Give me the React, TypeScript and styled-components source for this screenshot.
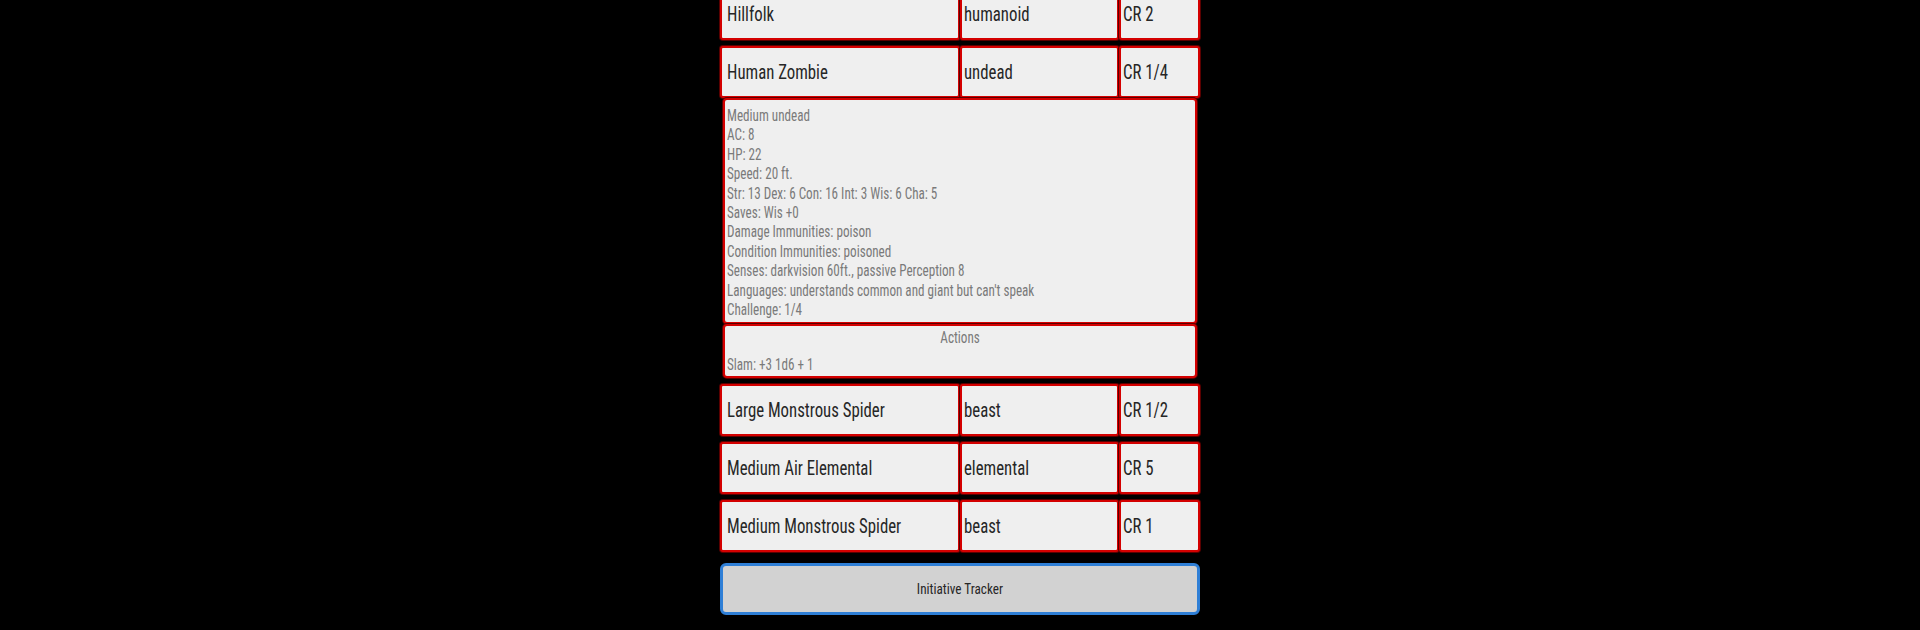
import styled, { createGlobalStyle } from 'styled-components'

const FONT = `"Roboto Condensed", Roboto, "Liberation Sans", sans-serif`

const GlobalStyle = createGlobalStyle`
  html, body {
    margin: 0;
    padding: 0;
    background: #000;
    height: 630px;
    overflow: hidden;
  }
  body {
    font-family: ${FONT};
  }
`

// no condensed face installed: squeeze Roboto to the condensed widths
const Narrow = styled.span<{ $x?: number; $origin?: string }>`
  display: inline-block;
  white-space: nowrap;
  transform: scaleX(${(p) => p.$x ?? 0.86});
  transform-origin: ${(p) => p.$origin ?? 'left'} center;
`

const Screen = styled.div`
  width: 480px;
  margin: 0 auto;
  display: flex;
  flex-direction: column;
  /* list is scrolled a little: first row is cut at the top */
  margin-top: -12px;
`

const Row = styled.div<{ $open?: boolean }>`
  display: grid;
  grid-template-columns: 240px 159px 81px;
  height: 52px;
  margin-bottom: ${(p) => (p.$open ? '0' : '6px')};
`

const Cell = styled.div<{ $pad?: number }>`
  box-sizing: border-box;
  display: flex;
  align-items: center;
  padding-left: ${(p) => p.$pad ?? 3}px;
  background: #efefef;
  border: 2px solid #d40000;
  border-radius: 3px;
  box-shadow: 0 0 0 1px #5a0000;
  color: #262626;
  font-size: 19.5px;
  overflow: hidden;
`

const Details = styled.div`
  box-sizing: border-box;
  margin: 0 3px;
  padding: 6px 2px 2px;
  height: 226px;
  background: #efefef;
  border: 2px solid #d40000;
  border-radius: 4px;
  box-shadow: 0 0 0 1px #5a0000;
  color: #7a7a7a;
  font-size: 16px;
  line-height: 19.4px;
`

const Line = styled.div`
  white-space: nowrap;
`

const Actions = styled(Details)`
  height: 54px;
  padding-top: 2px;
  margin-bottom: 6px;
`

const ActionsTitle = styled.div`
  text-align: center;
  margin-bottom: 8px;
`

const TrackerButton = styled.button`
  box-sizing: border-box;
  margin-top: 5px;
  width: 480px;
  height: 52px;
  background: #d2d2d2;
  border: 3px solid #2f7fd6;
  border-radius: 6px;
  color: #262626;
  font-family: ${FONT};
  font-size: 15px;
  cursor: pointer;
`

interface Monster {
  name: string
  type: string
  cr: string
}

const monsters: Monster[] = [
  { name: 'Hillfolk', type: 'humanoid', cr: 'CR 2' },
  { name: 'Human Zombie', type: 'undead', cr: 'CR 1/4' },
  { name: 'Large Monstrous Spider', type: 'beast', cr: 'CR 1/2' },
  { name: 'Medium Air Elemental', type: 'elemental', cr: 'CR 5' },
  { name: 'Medium Monstrous Spider', type: 'beast', cr: 'CR 1' },
]

const zombieStats = [
  'Medium undead',
  'AC: 8',
  'HP: 22',
  'Speed: 20 ft.',
  'Str: 13 Dex: 6 Con: 16 Int: 3 Wis: 6 Cha: 5',
  'Saves: Wis +0',
  'Damage Immunities: poison',
  'Condition Immunities: poisoned',
  'Senses: darkvision 60ft., passive Perception 8',
  "Languages: understands common and giant but can't speak",
  'Challenge: 1/4',
]

const OPEN = 'Human Zombie'

function MonsterRow({ m }: { m: Monster }) {
  const open = m.name === OPEN
  return (
    <>
      <Row $open={open}>
        <Cell $pad={5}><Narrow>{m.name}</Narrow></Cell>
        <Cell $pad={2}><Narrow>{m.type}</Narrow></Cell>
        <Cell $pad={2}><Narrow>{m.cr}</Narrow></Cell>
      </Row>
      {open && (
        <>
          <Details>
            {zombieStats.map((s) => (
              <Line key={s}><Narrow $x={0.82}>{s}</Narrow></Line>
            ))}
          </Details>
          <Actions>
            <ActionsTitle><Narrow $x={0.82} $origin="center">Actions</Narrow></ActionsTitle>
            <Line><Narrow $x={0.82}>Slam: +3 1d6 + 1</Narrow></Line>
          </Actions>
        </>
      )}
    </>
  )
}

export default function App() {
  return (
    <>
      <GlobalStyle />
      <Screen>
        {monsters.map((m) => (
          <MonsterRow key={m.name} m={m} />
        ))}
        <TrackerButton>
          <Narrow $x={0.88} $origin="center">Initiative Tracker</Narrow>
        </TrackerButton>
      </Screen>
    </>
  )
}
